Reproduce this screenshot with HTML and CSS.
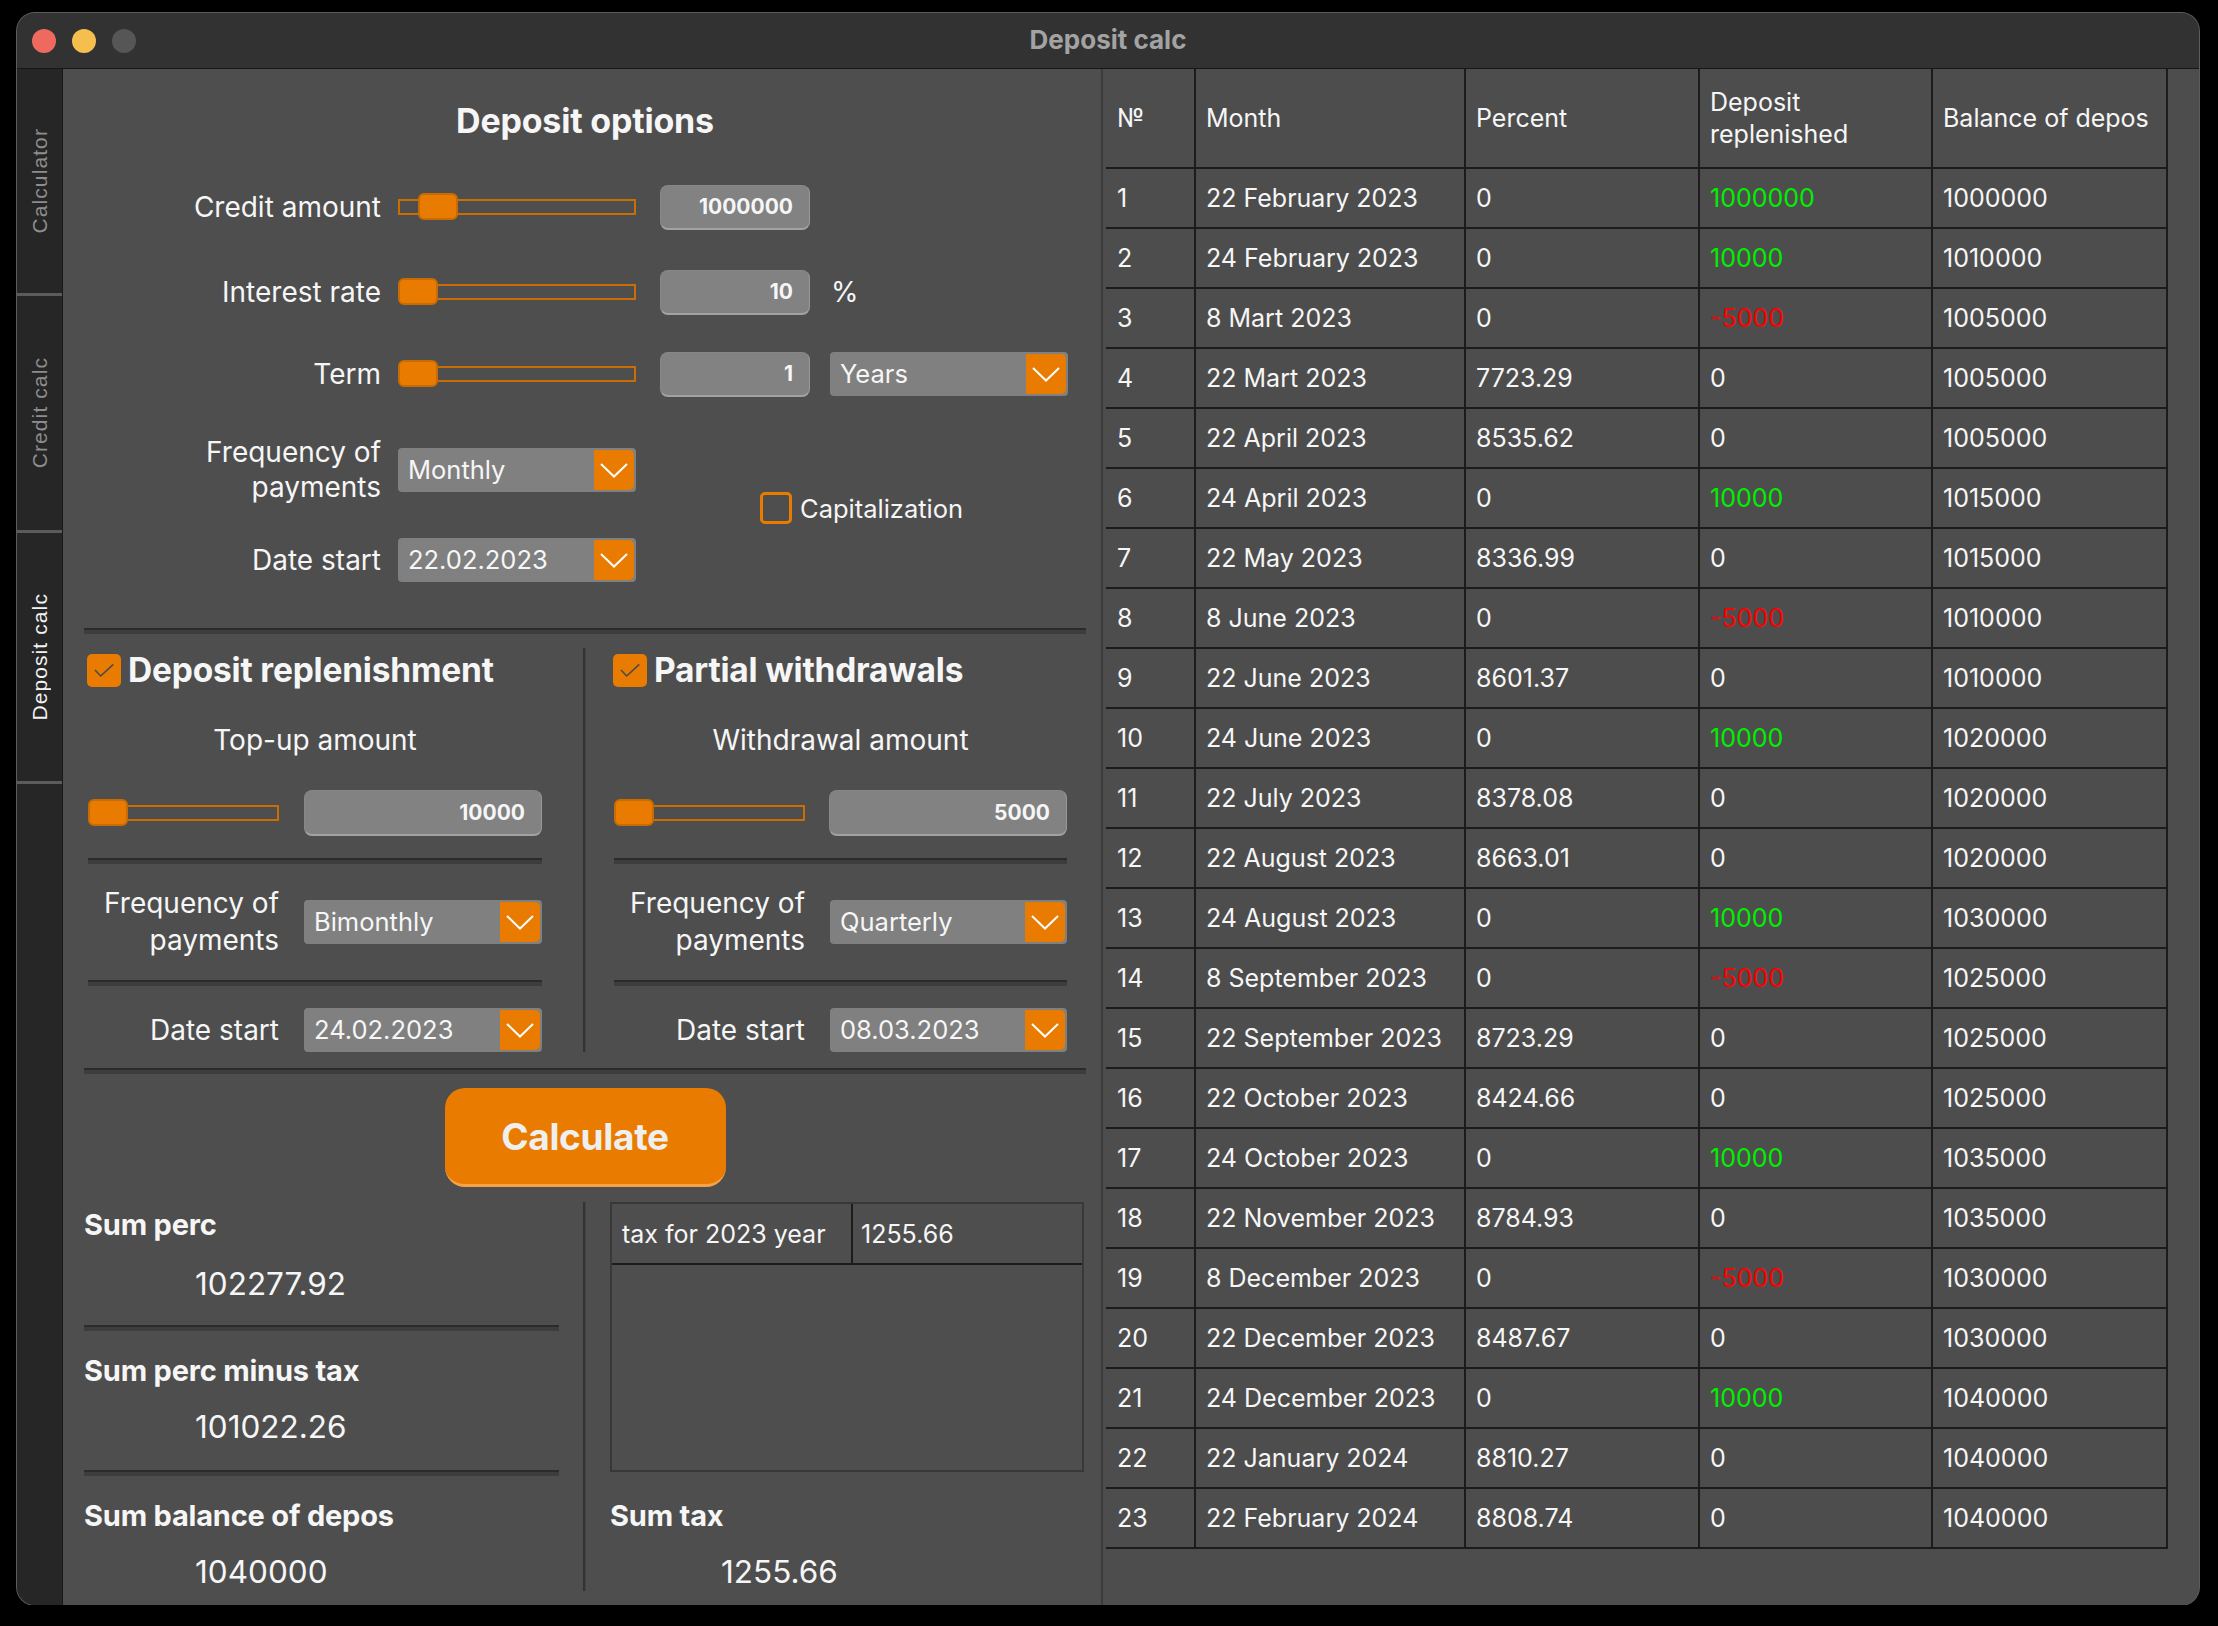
FILE: index.html
```html
<!DOCTYPE html>
<html lang="en">
<head>
<meta charset="utf-8">
<title>Deposit calc</title>
<link rel="stylesheet" href="styles.css">
</head>
<body>
<div class="window">
  <header class="titlebar">
    <div class="lights">
      <span class="light red"></span>
      <span class="light yellow"></span>
      <span class="light gray"></span>
    </div>
    <div class="wtitle">Deposit calc</div>
    <div></div>
  </header>
  <div class="wbody">
    <nav class="tabs">
      <div class="tab tab1"><span>Calculator</span></div>
      <div class="tab tab2"><span>Credit calc</span></div>
      <div class="tab tab3 active"><span>Deposit calc</span></div>
    </nav>

    <main class="left">
      <h1 class="ptitle">Deposit options</h1>

      <div class="opts">
        <div class="lbl">Credit amount</div>
        <div class="cell"><div class="slider"><span class="handle h-credit"></span></div></div>
        <div class="cell"><div class="num">1000000</div></div>
        <div class="cell"></div>

        <div class="lbl">Interest rate</div>
        <div class="cell"><div class="slider"><span class="handle h-start"></span></div></div>
        <div class="cell"><div class="num">10</div></div>
        <div class="cell pct">%</div>

        <div class="lbl">Term</div>
        <div class="cell"><div class="slider"><span class="handle h-start"></span></div></div>
        <div class="cell"><div class="num">1</div></div>
        <div class="cell">
          <div class="combo"><span class="ctext">Years</span><span class="arrow"><svg width="28" height="15" viewBox="0 0 28 15"><polyline points="1,1 14,13.5 27,1" fill="none" stroke="#fff" stroke-width="2"/></svg></span></div>
        </div>

        <div class="lbl two">Frequency of<br>payments</div>
        <div class="cell">
          <div class="combo"><span class="ctext">Monthly</span><span class="arrow"><svg width="28" height="15" viewBox="0 0 28 15"><polyline points="1,1 14,13.5 27,1" fill="none" stroke="#fff" stroke-width="2"/></svg></span></div>
        </div>
        <div class="cap">
          <span class="box-off"></span><span class="captext">Capitalization</span>
        </div>

        <div class="lbl">Date start</div>
        <div class="cell">
          <div class="combo"><span class="ctext">22.02.2023</span><span class="arrow"><svg width="28" height="15" viewBox="0 0 28 15"><polyline points="1,1 14,13.5 27,1" fill="none" stroke="#fff" stroke-width="2"/></svg></span></div>
        </div>
      </div>

      <div class="sep sep-top"></div>

      <div class="twocol">
        <div class="col">
          <div class="col-head">
            <span class="box-on"><svg width="34" height="33" viewBox="0 0 34 33"><polyline points="8,16 13.7,22 26.3,10.3" fill="none" stroke="#4a4a4a" stroke-width="1.6"/></svg></span>
            <span class="htext">Deposit replenishment</span>
          </div>
          <div class="sub">Top-up amount</div>
          <div class="srow">
            <div class="slider small"><span class="handle h-start"></span></div>
            <div class="num wide">10000</div>
          </div>
          <div class="sep"></div>
          <div class="frow">
            <div class="flabel">Frequency of<br>payments</div>
            <div class="combo"><span class="ctext">Bimonthly</span><span class="arrow"><svg width="28" height="15" viewBox="0 0 28 15"><polyline points="1,1 14,13.5 27,1" fill="none" stroke="#fff" stroke-width="2"/></svg></span></div>
          </div>
          <div class="sep"></div>
          <div class="frow date">
            <div class="flabel">Date start</div>
            <div class="combo"><span class="ctext">24.02.2023</span><span class="arrow"><svg width="28" height="15" viewBox="0 0 28 15"><polyline points="1,1 14,13.5 27,1" fill="none" stroke="#fff" stroke-width="2"/></svg></span></div>
          </div>
        </div>

        <div class="vwrap"><div class="vdiv"></div></div>

        <div class="col">
          <div class="col-head">
            <span class="box-on"><svg width="34" height="33" viewBox="0 0 34 33"><polyline points="8,16 13.7,22 26.3,10.3" fill="none" stroke="#4a4a4a" stroke-width="1.6"/></svg></span>
            <span class="htext">Partial withdrawals</span>
          </div>
          <div class="sub">Withdrawal amount</div>
          <div class="srow">
            <div class="slider small"><span class="handle h-start"></span></div>
            <div class="num wide">5000</div>
          </div>
          <div class="sep"></div>
          <div class="frow">
            <div class="flabel">Frequency of<br>payments</div>
            <div class="combo"><span class="ctext">Quarterly</span><span class="arrow"><svg width="28" height="15" viewBox="0 0 28 15"><polyline points="1,1 14,13.5 27,1" fill="none" stroke="#fff" stroke-width="2"/></svg></span></div>
          </div>
          <div class="sep"></div>
          <div class="frow date">
            <div class="flabel">Date start</div>
            <div class="combo"><span class="ctext">08.03.2023</span><span class="arrow"><svg width="28" height="15" viewBox="0 0 28 15"><polyline points="1,1 14,13.5 27,1" fill="none" stroke="#fff" stroke-width="2"/></svg></span></div>
          </div>
        </div>
      </div>

      <div class="sep"></div>

      <button class="calc">Calculate</button>

      <div class="bottom">
        <div class="bcol">
          <div class="grp first">
            <div class="slabel">Sum perc</div>
            <div class="sval v1">102277.92</div>
          </div>
          <div class="sep s1"></div>
          <div class="grp">
            <div class="slabel">Sum perc minus tax</div>
            <div class="sval">101022.26</div>
          </div>
          <div class="sep s2"></div>
          <div class="grp">
            <div class="slabel">Sum balance of depos</div>
            <div class="sval">1040000</div>
          </div>
        </div>
        <div class="vwrap2"><div class="vdiv"></div></div>
        <div class="bcol">
          <div class="taxtbl">
            <div class="taxrow"><div>tax for 2023 year</div><div>1255.66</div></div>
          </div>
          <div class="grp tax">
            <div class="slabel">Sum tax</div>
            <div class="sval">1255.66</div>
          </div>
        </div>
      </div>
    </main>

    <section class="right">
      <div class="tbl">
        <div class="th">№</div><div class="th">Month</div><div class="th">Percent</div><div class="th">Deposit<br>replenished</div><div class="th">Balance of depos</div>
        <div>1</div><div>22 February 2023</div><div>0</div><div class="g">1000000</div><div>1000000</div>
        <div>2</div><div>24 February 2023</div><div>0</div><div class="g">10000</div><div>1010000</div>
        <div>3</div><div>8 Mart 2023</div><div>0</div><div class="r">-5000</div><div>1005000</div>
        <div>4</div><div>22 Mart 2023</div><div>7723.29</div><div>0</div><div>1005000</div>
        <div>5</div><div>22 April 2023</div><div>8535.62</div><div>0</div><div>1005000</div>
        <div>6</div><div>24 April 2023</div><div>0</div><div class="g">10000</div><div>1015000</div>
        <div>7</div><div>22 May 2023</div><div>8336.99</div><div>0</div><div>1015000</div>
        <div>8</div><div>8 June 2023</div><div>0</div><div class="r">-5000</div><div>1010000</div>
        <div>9</div><div>22 June 2023</div><div>8601.37</div><div>0</div><div>1010000</div>
        <div>10</div><div>24 June 2023</div><div>0</div><div class="g">10000</div><div>1020000</div>
        <div>11</div><div>22 July 2023</div><div>8378.08</div><div>0</div><div>1020000</div>
        <div>12</div><div>22 August 2023</div><div>8663.01</div><div>0</div><div>1020000</div>
        <div>13</div><div>24 August 2023</div><div>0</div><div class="g">10000</div><div>1030000</div>
        <div>14</div><div>8 September 2023</div><div>0</div><div class="r">-5000</div><div>1025000</div>
        <div>15</div><div>22 September 2023</div><div>8723.29</div><div>0</div><div>1025000</div>
        <div>16</div><div>22 October 2023</div><div>8424.66</div><div>0</div><div>1025000</div>
        <div>17</div><div>24 October 2023</div><div>0</div><div class="g">10000</div><div>1035000</div>
        <div>18</div><div>22 November 2023</div><div>8784.93</div><div>0</div><div>1035000</div>
        <div>19</div><div>8 December 2023</div><div>0</div><div class="r">-5000</div><div>1030000</div>
        <div>20</div><div>22 December 2023</div><div>8487.67</div><div>0</div><div>1030000</div>
        <div>21</div><div>24 December 2023</div><div>0</div><div class="g">10000</div><div>1040000</div>
        <div>22</div><div>22 January 2024</div><div>8810.27</div><div>0</div><div>1040000</div>
        <div>23</div><div>22 February 2024</div><div>8808.74</div><div>0</div><div>1040000</div>
      </div>
    </section>
  </div>
</div>
</body>
</html>
```

FILE: styles.css
```css
* { box-sizing: border-box; margin: 0; padding: 0; }
html, body { background: #000; }
body {
  padding: 13px 0 0 17px;
  font-family: Inter, "Noto Sans", "Liberation Sans", sans-serif;
  color: #f6f6f6;
}

.window {
  width: 2182px;
  height: 1592px;
  border-radius: 18px;
  overflow: hidden;
  background: #4e4e4e;
  box-shadow: 0 0 0 1px #5c5c5c;
  display: flex;
  flex-direction: column;
}

/* title bar */
.titlebar {
  height: 56px;
  flex: none;
  background: #323232;
  border-bottom: 1px solid #161616;
  display: grid;
  grid-template-columns: 1fr auto 1fr;
  align-items: center;
}
.lights { display: flex; gap: 16px; padding-left: 15px; }
.light { width: 24px; height: 24px; border-radius: 50%; display: block; }
.red { background: #ee6a5e; }
.yellow { background: #f5bf4f; }
.gray { background: #565656; }
.wtitle { font-weight: 700; font-size: 26px; color: #a3a3a3; margin-top: -3px; }

.wbody { flex: 1; display: flex; min-height: 0; }

/* sidebar tabs */
.tabs {
  width: 46px;
  flex: none;
  background: #262626;
  border-right: 1px solid #1a1a1a;
  display: flex;
  flex-direction: column;
}
.tab {
  border-bottom: 3px solid #5b5b5b;
  display: flex;
  align-items: center;
  justify-content: center;
}
.tab span {
  writing-mode: vertical-rl;
  transform: rotate(180deg);
  font-family: "Liberation Sans", Arial, sans-serif;
  font-size: 21px;
  letter-spacing: 1.1px;
  color: #8d8d8d;
  padding-right: 1px;
}
.tab1 { height: 227px; }
.tab2 { height: 237px; }
.tab3 { height: 251px; }
.tab.active span { color: #f2f2f2; }

/* left panel */
.left {
  width: 1040px;
  flex: none;
  padding: 0 15px 0 21px;
  border-right: 2px solid #3b3b3b;
  display: flex;
  flex-direction: column;
}
.ptitle {
  font-size: 34px;
  font-weight: 700;
  text-align: center;
  height: 40px;
  line-height: 40px;
  margin: 32px 0 24px;
  letter-spacing: -0.2px;
}

.opts {
  display: grid;
  grid-template-columns: 314px 262px 170px 238px;
  grid-template-rows: 84px 86px 78px 114px 66px;
}
.lbl {
  display: flex;
  align-items: center;
  justify-content: flex-end;
  text-align: right;
  padding-right: 17px;
  font-size: 28px;
}
.lbl.two { line-height: 35px; }
.cell { display: flex; align-items: center; }
.pct { font-size: 28px; padding-left: 1px; }

.slider {
  position: relative;
  width: 238px;
  height: 16px;
  border: 2px solid #c96d05;
}
.slider.small { width: 191px; }
.handle {
  position: absolute;
  top: -8px;
  width: 40px;
  height: 27px;
  border-radius: 6px;
  background: #e97c00;
  border: 2px solid #c76b02;
}
.h-credit { left: 18px; }
.h-start { left: -2px; }

.num {
  width: 150px;
  height: 45px;
  background: #828282;
  border: 1px solid #878787;
  border-bottom: 2px solid #a2a2a2;
  border-right-color: #989898;
  border-radius: 8px;
  display: flex;
  align-items: center;
  justify-content: flex-end;
  padding-right: 16px;
  font-weight: 700;
  font-size: 21px;
}
.num.wide { width: 238px; height: 46px; }

.combo {
  width: 238px;
  height: 44px;
  background: #808080;
  border-radius: 4px;
  display: flex;
  align-items: center;
  justify-content: space-between;
  padding: 2px;
}
.ctext { font-size: 25.5px; padding-left: 8px; margin-top: -2px; }
.arrow {
  width: 40px;
  height: 40px;
  background: #e97c00;
  border-radius: 1px 5px 5px 1px;
  display: flex;
  align-items: center;
  justify-content: center;
}
.arrow svg { display: block; }

.cap {
  grid-column: 3 / 5;
  grid-row: 4 / 6;
  display: flex;
  align-items: center;
  padding: 10px 0 0 100px;
}
.box-off {
  width: 32px;
  height: 32px;
  border: 3px solid #e97c00;
  border-radius: 5px;
}
.captext { font-size: 25.5px; margin-left: 8px; }

.sep {
  height: 6px;
  flex: none;
  border-top: 2px solid #2b2b2b;
  background: #3d3d3d;
}
.sep-top { margin-top: 35px; }

/* two columns */
.twocol {
  display: grid;
  grid-template-columns: 454px 72px 453px;
  padding-left: 4px;
  height: 434px;
}
.col { display: flex; flex-direction: column; }
.col-head {
  margin-top: 16px;
  height: 40px;
  display: flex;
  align-items: center;
  gap: 7px;
}
.box-on {
  width: 34px;
  height: 33px;
  border-radius: 5px;
  background: #e97c00;
  display: block;
  margin-left: -1px;
}
.box-on svg { display: block; }
.htext { font-size: 33.5px; font-weight: 700; letter-spacing: -0.2px; }
.sub {
  height: 100px;
  display: flex;
  align-items: center;
  justify-content: center;
  font-size: 28px;
}
.srow {
  height: 46px;
  display: flex;
  align-items: center;
  justify-content: space-between;
  margin-bottom: 22px;
}
.frow {
  height: 116px;
  display: flex;
  align-items: center;
  gap: 25px;
}
.frow.date { height: 82px; padding-top: 6px; }
.flabel {
  width: 191px;
  flex: none;
  text-align: right;
  font-size: 28px;
  line-height: 37px;
  white-space: nowrap;
}
.vwrap { padding: 14px 0 16px 41px; }
.vdiv {
  width: 3px;
  height: 100%;
  background: #333;
  border-right: 1px solid #454545;
}

/* calculate */
.calc {
  display: flex;
  align-items: center;
  justify-content: center;
  align-self: center;
  width: 281px;
  height: 101px;
  margin-top: 14px;
  background: #e97c00;
  border: none;
  border-bottom: 3px solid #f5a346;
  border-radius: 20px;
  font-family: Inter, "Noto Sans", sans-serif;
  font-weight: 700;
  font-size: 37px;
  letter-spacing: -0.3px;
  color: #efefef;
}

/* bottom */
.bottom {
  margin-top: 15px;
  flex: 1;
  display: grid;
  grid-template-columns: 475px 51px 1fr;
}
.bcol { display: flex; flex-direction: column; }
.grp { padding-top: 17px; }
.grp.first { padding-top: 0; }
.grp.tax { padding-top: 21px; }
.slabel {
  height: 44px;
  display: flex;
  align-items: center;
  font-size: 29px;
  font-weight: 700;
  letter-spacing: -0.2px;
}
.sval {
  height: 68px;
  display: flex;
  align-items: center;
  padding-left: 111px;
  font-size: 31.5px;
}
.sval.v1 { height: 74px; }
.s1 { margin-top: 5px; }
.s2 { margin-top: 10px; }
.vwrap2 { padding: 0 0 14px 24px; }

.taxtbl {
  width: 474px;
  height: 270px;
  border: 2px solid #383838;
  flex: none;
}
.taxrow {
  display: grid;
  grid-template-columns: 239px 1fr;
  height: 61px;
  border-bottom: 2px solid #1c1c1c;
  font-size: 25px;
}
.taxrow div { display: flex; align-items: center; padding-left: 10px; }
.taxrow div + div { border-left: 2px solid #1c1c1c; padding-left: 8px; }

/* right table */
.right {
  flex: 1;
  padding-left: 3px;
  background: #4d4d4d;
}
.tbl {
  display: grid;
  grid-template-columns: 88px 268px 232px 231px 233px;
  grid-template-rows: 98px;
  grid-auto-rows: 58px;
  gap: 2px;
  padding: 0 2px 2px 0;
  background: #1c1c1c;
  width: max-content;
  font-size: 25px;
}
.tbl > div {
  background: #4d4d4d;
  display: flex;
  align-items: center;
  padding-left: 10px;
  white-space: nowrap;
}
.tbl > div:nth-child(5n+1) { padding-left: 11px; }
.tbl .th { line-height: 32px; white-space: normal; }
.tbl .g { color: #00f000; }
.tbl .r { color: #ff0000; }
```
